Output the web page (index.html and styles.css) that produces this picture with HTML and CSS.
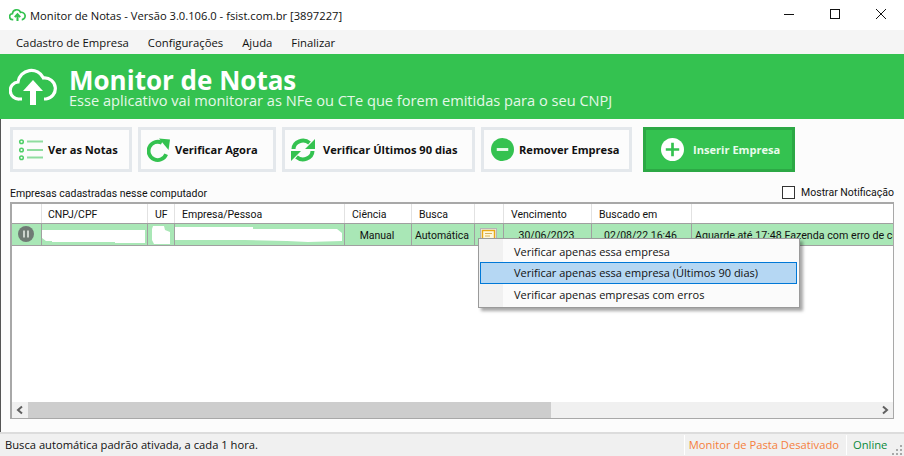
FILE: index.html
```html
<!DOCTYPE html>
<html lang="pt-BR">
<head>
<meta charset="utf-8">
<title>Monitor de Notas</title>
<link rel="stylesheet" href="styles.css">
</head>
<body>
<div class="window">
  <header class="titlebar">
    <svg class="app-icon" viewBox="0 0 20 16" width="17" height="14"><path d="M5 13.5H4.5a3.5 3.5 0 0 1-.5-7 5 5 0 0 1 9.6-1.6A4.3 4.3 0 0 1 15.500 13.500H15" fill="none" stroke="#34c250" stroke-width="2"/><path d="M10 15V8M6.800 10.500 10 7l3.200 3.500" fill="none" stroke="#34c250" stroke-width="2.400"/></svg>
    <span class="title-text">Monitor de Notas - Versão 3.0.106.0 - fsist.com.br [3897227]</span>
    <div class="win-controls">
      <svg viewBox="0 0 46 30" width="46" height="30"><path d="M18 14.500h10" stroke="#111" fill="none"/></svg>
      <svg viewBox="0 0 46 30" width="46" height="30"><rect x="18.500" y="9.500" width="9" height="9" stroke="#111" fill="none"/></svg>
      <svg viewBox="0 0 46 30" width="46" height="30"><path d="M18 9l10 10M28 9 18 19" stroke="#111" fill="none"/></svg>
    </div>
  </header>
  <nav class="menubar">
    <span>Cadastro de Empresa</span><span>Configurações</span><span>Ajuda</span><span>Finalizar</span>
  </nav>
  <section class="banner">
    <svg class="banner-icon" viewBox="0 0 48 39" width="48" height="39"><path d="M13 33H10.500A8.500 8.500 0 0 1 9 16 13.500 13.500 0 0 1 34.500 12 10.500 10.500 0 0 1 37 33h-2" fill="none" stroke="#fff" stroke-width="3.200"/><path d="M24 39V21" stroke="#fff" stroke-width="6" fill="none"/><path d="M14 25 24 14l10 11z" fill="#fff"/></svg>
    <div class="banner-text">
      <h1>Monitor de Notas</h1>
      <p>Esse aplicativo vai monitorar as NFe ou CTe que forem emitidas para o seu CNPJ</p>
    </div>
  </section>
  <main class="content">
    <div class="toolbar">
      <button class="btn btn-notas">
        <svg viewBox="0 0 26 24" width="26" height="24"><g fill="none"><g stroke="#4fcf68" stroke-width="1.500"><circle cx="3.500" cy="3.800" r="1.800"/><circle cx="3.500" cy="12" r="1.800"/><circle cx="3.500" cy="19.800" r="1.800"/></g><path d="M9 3.500h16M9 12h16M9 19.500h16" stroke="#8fdd9f" stroke-width="2"/></g></svg>
        Ver as Notas
      </button>
      <button class="btn btn-agora">
        <svg viewBox="0 0 24 24" width="23" height="24"><path d="M20 16.500A9.500 9.500 0 1 1 15.500 4.500" fill="none" stroke="#34c250" stroke-width="4"/><path d="M12.500 0 24 1 22.500 12z" fill="#34c250"/></svg>
        Verificar Agora
      </button>
      <button class="btn btn-90">
        <svg viewBox="0 0 24 24" width="24" height="24"><path d="M2.500 11A9.500 8.500 0 0 1 18.500 5M21.500 13A9.500 8.500 0 0 1 5.500 19" fill="none" stroke="#34c250" stroke-width="4"/><path d="M24 1v10H14zM0 23V13h10z" fill="#34c250"/></svg>
        Verificar Últimos 90 dias
      </button>
      <button class="btn btn-remover">
        <svg viewBox="0 0 24 24" width="23" height="23"><circle cx="12" cy="12" r="12" fill="#34c250"/><rect x="6" y="10.500" width="12" height="3" fill="#e9fbec"/></svg>
        Remover Empresa
      </button>
      <button class="btn btn-inserir">
        <svg viewBox="0 0 24 24" width="23" height="23"><circle cx="12" cy="12" r="12" fill="#fff"/><path d="M12 5v14M5 12h14" stroke="#34c250" stroke-width="2.800"/></svg>
        Inserir Empresa
      </button>
    </div>
    <div class="list-head">
      <span>Empresas cadastradas nesse computador</span>
      <label class="notify"><span class="check"></span>Mostrar Notificação</label>
    </div>
    <div class="grid">
      <div class="grid-scroll">
        <div class="row head">
          <div class="cell"></div><div class="cell">CNPJ/CPF</div><div class="cell">UF</div><div class="cell">Empresa/Pessoa</div><div class="cell">Ciência</div><div class="cell">Busca</div><div class="cell"></div><div class="cell">Vencimento</div><div class="cell">Buscado em</div><div class="cell"></div>
        </div>
        <div class="row data">
          <div class="cell pause"><svg viewBox="0 0 16 16" width="16" height="16"><circle cx="8" cy="8" r="8" fill="#6f7a74"/><path d="M6 4.500v7M10 4.500v7" stroke="#d6dcd8" stroke-width="1.800"/></svg></div>
          <div class="cell mask mask-cnpj"><i></i></div>
          <div class="cell mask mask-uf"><i></i></div>
          <div class="cell mask mask-nome"><i></i></div>
          <div class="cell center">Manual</div>
          <div class="cell">Automática</div>
          <div class="cell note"><svg viewBox="0 0 17 15" width="17" height="15"><rect x=".5" y=".5" width="16" height="14" fill="#e6e9e6" stroke="#b5b5b5"/><rect x="2.500" y="2.500" width="12" height="9" fill="#fff8dc" stroke="#eba917" stroke-width="1.400"/><path d="M5 5.500h7M5 8h5" stroke="#d9b25a"/><rect x="10" y="10" width="6" height="4" fill="#eba917"/></svg></div>
          <div class="cell center">30/06/2023</div>
          <div class="cell center">02/08/22 16:46</div>
          <div class="cell clip">Aguarde até 17:48 Fazenda com erro de comunicação</div>
        </div>
      </div>
      <div class="hscroll">
        <svg viewBox="0 0 16 16" width="16" height="16"><path d="M10 4.500 6 8l4 3.500" fill="none" stroke="#606060" stroke-width="2"/></svg>
        <div class="thumb"></div>
        <div class="track"></div>
        <svg viewBox="0 0 16 16" width="16" height="16"><path d="M6 4.500 10 8l-4 3.500" fill="none" stroke="#606060" stroke-width="2"/></svg>
      </div>
    </div>
  </main>
  <footer class="statusbar">
    <span class="status-main">Busca automática padrão ativada, a cada 1 hora.</span>
    <span class="status-pasta">Monitor de Pasta Desativado</span>
    <span class="status-online">Online</span>
    <svg class="grip" viewBox="0 0 10 10" width="10" height="10"><path d="M8 0h2v2H8zM4 4h2v2H4zM8 4h2v2H8zM0 8h2v2H0zM4 8h2v2H4zM8 8h2v2H8z" fill="#a8a8a8"/></svg>
  </footer>
  <div class="context-menu">
    <div class="ctx-item">Verificar apenas essa empresa</div>
    <div class="ctx-item active">Verificar apenas essa empresa (Últimos 90 dias)</div>
    <div class="ctx-item">Verificar apenas empresas com erros</div>
  </div>
</div>
</body>
</html>
```

FILE: styles.css
```css
* { box-sizing: border-box; }
html, body { margin: 0; padding: 0; }
body { width: 904px; height: 456px; overflow: hidden; background: #fff; font-family: "Open Sans", "Noto Sans", "Liberation Sans", sans-serif; font-size: 11.3px; color: #111; }
.window { position: relative; width: 904px; height: 456px; display: flex; flex-direction: column; }

.titlebar { height: 30px; display: flex; align-items: center; background: #fff; padding-left: 9px; flex: none; }
.app-icon { margin-right: 4px; }
.title-text { font-size: 11.2px; }
.win-controls { margin-left: auto; display: flex; }

.menubar { height: 24px; background: #f5f5f5; display: flex; align-items: center; gap: 19px; padding-left: 16px; flex: none; }

.banner { height: 65px; background: #34c250; color: #fff; display: flex; align-items: flex-start; padding: 12px 0 0 9px; flex: none; }
.banner-icon { margin-right: 12px; }
.banner-text { display: flex; flex-direction: column; }
.banner h1 { margin: 0; font-size: 26px; line-height: 28px; font-weight: 700; height: 26px; }
.banner p { margin: 0; font-size: 14.600px; line-height: 16px; color: #e4f8e8; white-space: nowrap; }

.content { flex: 1; background: #fcfcfc; display: flex; flex-direction: column; padding: 8px 10px 0 9px; min-height: 0; border-left: 1px solid #555; }
.toolbar { display: flex; height: 45px; gap: 6px; flex: none; }
.btn { height: 45px; border: 3px solid #e4e8ec; background: #fcfcfc; display: flex; align-items: center; padding: 0; font: 700 11.100px "Open Sans", "Noto Sans", sans-serif; color: #111; flex: none; }
.btn-notas { width: 122px; padding-left: 5px; gap: 4px; }
.btn-agora { width: 138px; padding-left: 6px; gap: 5px; }
.btn-90 { width: 193px; padding-left: 6px; gap: 8px; }
.btn-remover { width: 151px; padding-left: 7px; gap: 5px; }
.btn-inserir { width: 152px; margin-left: 5px; background: #34c250; border-color: #2ca845; color: #e9fbec; padding-left: 15px; gap: 9px; }

.list-head { height: 30px; display: flex; align-items: flex-end; justify-content: space-between; padding-bottom: 2px; font-family: Roboto, sans-serif; font-size: 10.500px; flex: none; }
.notify { display: flex; align-items: center; gap: 6px; margin-bottom: 1px; }
.check { width: 13px; height: 13px; border: 1px solid #333; background: #fff; }

.grid { height: 217px; border-style: solid; border-color: #a8a8a8; border-width: 2px 1px 1px 2px; background: #fff; display: flex; flex-direction: column; flex: none; font-family: Roboto, sans-serif; font-size: 10.500px; }
.grid-scroll { flex: 1; min-height: 0; overflow: hidden; }
.row { display: grid; grid-template-columns: 30px 106px 27px 170px 67px 63px 29px 88px 100px 201px; }
.cell { display: flex; align-items: center; padding-left: 6px; white-space: nowrap; overflow: hidden; }
.head { height: 20px; background: #fff; border-bottom: 1px solid #a0a0a0; }
.head .cell { border-right: 1px solid #e2e2e2; padding-left: 7px; padding-top: 1px; }
.head .cell:nth-child(2) { padding-left: 6px; }
.head .cell:last-child { border-right: 0; }
.data { height: 22px; background: #a9e7b6; border-bottom: 1px solid #a0a0a0; }
.data .cell { border-right: 1px solid #a0a0a0; padding-left: 3px; padding-top: 1px; }
.data .cell:last-child { border-right: 0; }
.data .center { justify-content: center; padding-left: 0; padding-right: 2px; }
.data .pause { padding: 0 0 1px 6px; }
.data .note { padding: 4px 0 2px 5px; align-items: flex-start; }
.data .clip { padding-left: 3px; font-size: 10.700px; }
.data .mask { padding: 0; align-items: stretch; }
.mask i { display: block; background: #fff; width: 100%; height: 21px; }
.mask-cnpj i { clip-path: polygon(0 6px, 103px 6px, 103px 19px, 73px 19px, 73px 18px, 10px 18px, 10px 17px, 4px 17px, 0 14px); }
.mask-uf i { clip-path: polygon(5px 2px, 16px 2px, 17px 6px, 22px 8px, 22px 20px, 6px 20px, 4px 16px, 4px 5px); }
.mask-nome i { clip-path: polygon(0 3px, 78px 3px, 78px 5px, 162px 5px, 167px 9px, 167px 17px, 133px 18px, 112px 17px, 70px 16px, 0 16px); }

.hscroll { height: 16px; display: flex; background: #f0f0f0; flex: none; }
.hscroll svg { flex: none; }
.thumb { width: 523px; background: #cdcdcd; }
.track { flex: 1; }

.statusbar { height: 24px; border-top: 2px solid #dcdcdc; background: #f0f0f0; display: flex; align-items: center; font-size: 11.200px; padding: 0 2px 1px 5px; flex: none; }
.status-main { flex: 1; }
.status-pasta { color: #f57f3c; padding: 0 7px 0 4px; border-left: 1px solid #fff; line-height: 20px; }
.status-online { color: #0a8a3a; padding: 0 0 0 6px; border-left: 1px solid #fff; line-height: 20px; width: 46px; }
.grip { margin: 10px 0 0 0; }

.context-menu { position: absolute; left: 478px; top: 238px; width: 322px; height: 70px; border: 1px solid #9a9a9a; box-shadow: 3px 3px 3px rgba(0,0,0,.35); padding: 2px 2px 2px 1px; z-index: 5; display: flex; flex-direction: column; background: linear-gradient(to right, #f1f1f1 24px, #fbfbfb 24px); }
.ctx-item { height: 22px; display: flex; align-items: center; padding-left: 33px; font-size: 11px; color: #111; border: 1px solid transparent; }
.ctx-item.active { background: #b5d7f3; border-color: #0078d7; }
```
